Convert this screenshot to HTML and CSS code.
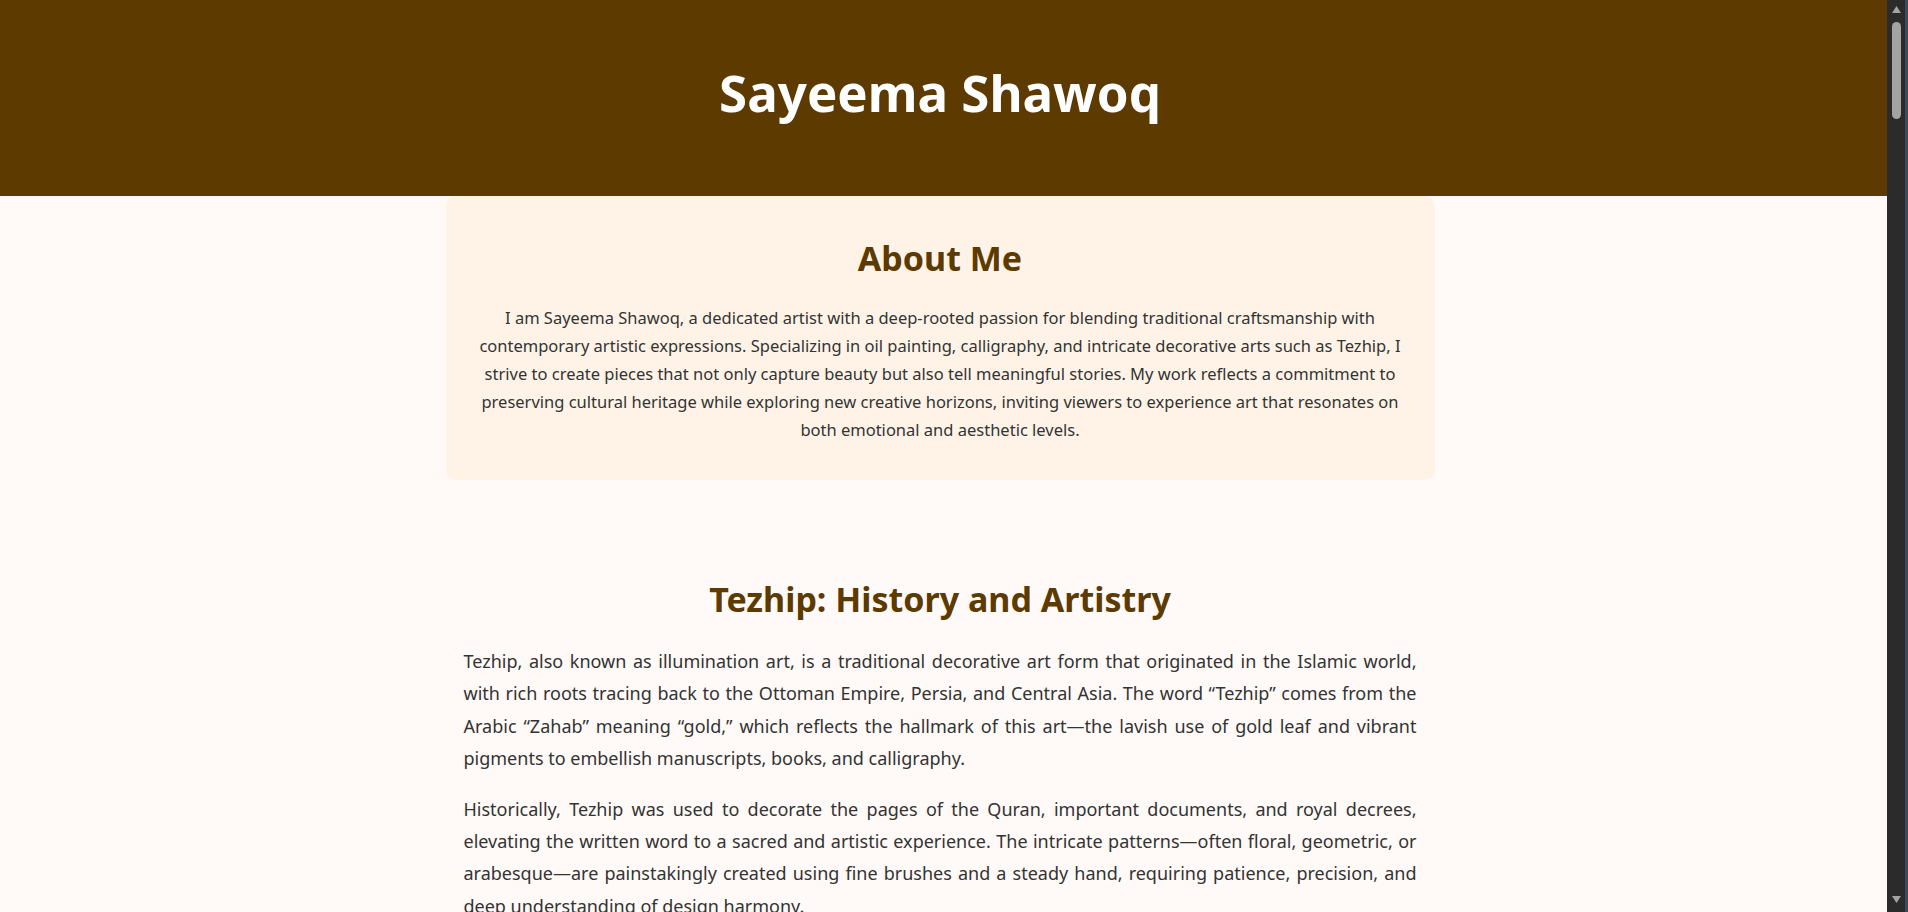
FILE: index.html
```html
<!DOCTYPE html>
<html lang="en">
<head>
<meta charset="utf-8">
<title>Sayeema Shawoq</title>
<link rel="stylesheet" href="styles.css">
</head>
<body>
<div class="app">
<div class="scroller">
<header class="site-header">
  <h1 class="site-title">Sayeema Shawoq</h1>
</header>
<main class="page">
  <section class="about">
    <h2 class="section-title">About Me</h2>
    <p class="about-text">I am Sayeema Shawoq, a dedicated artist with a deep-rooted passion for blending traditional craftsmanship with contemporary artistic expressions. Specializing in oil painting, calligraphy, and intricate decorative arts such as Tezhip, I strive to create pieces that not only capture beauty but also tell meaningful stories. My work reflects a commitment to preserving cultural heritage while exploring new creative horizons, inviting viewers to experience art that resonates on both emotional and aesthetic levels.</p>
  </section>

  <section class="article">
    <h2 class="section-title">Tezhip: History and Artistry</h2>
    <p class="article-text">Tezhip, also known as illumination art, is a traditional decorative art form that originated in the Islamic world, with rich roots tracing back to the Ottoman Empire, Persia, and Central Asia. The word “Tezhip” comes from the Arabic “Zahab” meaning “gold,” which reflects the hallmark of this art—the lavish use of gold leaf and vibrant pigments to embellish manuscripts, books, and calligraphy.</p>
    <p class="article-text">Historically, Tezhip was used to decorate the pages of the Quran, important documents, and royal decrees, elevating the written word to a sacred and artistic experience. The intricate patterns—often floral, geometric, or arabesque—are painstakingly created using fine brushes and a steady hand, requiring patience, precision, and deep understanding of design harmony.</p>
    <p class="article-text">Today, Tezhip continues to inspire artists around the world. By combining time-honoured techniques with contemporary compositions, the art form remains a living tradition that connects past and present.</p>
  </section>

  <section class="article">
    <h2 class="section-title">Oil Painting</h2>
    <p class="article-text">Oil painting allows for rich colour, depth and texture. Each canvas is built up layer by layer, capturing light, atmosphere and emotion in a way that invites the viewer to pause and reflect.</p>
  </section>

  <section class="article">
    <h2 class="section-title">Calligraphy</h2>
    <p class="article-text">Calligraphy is the art of beautiful writing. Through disciplined strokes and careful proportion, letters become visual poetry that carries both meaning and beauty.</p>
  </section>

  <section class="article">
    <h2 class="section-title">Gallery</h2>
    <div class="gallery">
      <div class="tile"></div><div class="tile"></div><div class="tile"></div>
      <div class="tile"></div><div class="tile"></div><div class="tile"></div>
      <div class="tile"></div><div class="tile"></div><div class="tile"></div>
    </div>
  </section>

  <section class="article">
    <h2 class="section-title">Contact</h2>
    <p class="article-text center">For commissions and enquiries, please get in touch.</p>
  </section>
</main>
<footer class="site-footer">© Sayeema Shawoq</footer>
</div>
<div class="scrollbar" aria-hidden="true">
  <svg class="sb-arrow sb-up" width="9" height="7" viewBox="0 0 9 7"><polygon points="4.5,0 9,7 0,7" fill="#a3a3a3"/></svg>
  <div class="sb-thumb"></div>
  <div class="sb-track"></div>
  <svg class="sb-arrow sb-down" width="9" height="7" viewBox="0 0 9 7"><polygon points="0,0 9,0 4.5,7" fill="#a3a3a3"/></svg>
</div>
</div>
</body>
</html>
```

FILE: styles.css
```css
html,
body {
  margin: 0;
  height: 100%;
  background: #fffaf7;
}
body {
  color: #333;
  font-family: "Noto Sans", "Open Sans", sans-serif;
}
.app {
  display: flex;
  height: 100vh;
}
.scroller {
  flex: 1;
  min-width: 0;
  overflow-y: auto;
  scrollbar-width: none;
  background: #fffaf7;
}
.scrollbar {
  width: 18px;
  flex: 0 0 auto;
  background: #2b2b2b;
  border-right: 3px solid #3d4a5c;
  display: flex;
  flex-direction: column;
  align-items: center;
}
.sb-arrow {
  display: block;
  flex: 0 0 auto;
}
.sb-up {
  margin-top: 6px;
}
.sb-thumb {
  margin-top: 9px;
  width: 9px;
  height: 97px;
  border-radius: 5px;
  background: #a3a3a3;
}
.sb-track {
  flex: 1;
}
.sb-down {
  margin-bottom: 9px;
}
.site-header {
  background: #5c3a00;
  height: 196px;
  box-sizing: border-box;
  padding: 0 7px 12px 0;
  display: flex;
  align-items: center;
  justify-content: center;
}
.site-title {
  margin: 0;
  color: #fff;
  font-size: 51px;
  font-weight: 700;
}
.page {
  padding-right: 7px;
}
.about {
  width: 989px;
  box-sizing: border-box;
  margin: 0 auto;
  background: #fff3e7;
  border-radius: 10px;
  padding: 39px 30px 36px;
  text-align: center;
}
.section-title {
  margin: 0 0 23px;
  color: #5c3a00;
  font-size: 34px;
  font-weight: 700;
  text-align: center;
}
.about-text {
  margin: 0;
  font-size: 16.5px;
  line-height: 28px;
}
.article {
  width: 989px;
  box-sizing: border-box;
  margin: 0 auto;
  padding: 96px 18px 0;
}
.article-text {
  margin: 0 0 18px;
  font-size: 18px;
  line-height: 32.4px;
  text-align: justify;
}
.center {
  text-align: center;
}
.gallery {
  display: grid;
  grid-template-columns: repeat(3, 1fr);
  gap: 24px;
}
.tile {
  height: 1400px;
  background: #f3e6d6;
  border-radius: 10px;
}
.site-footer {
  margin-top: 80px;
  background: #5c3a00;
  color: #fff;
  text-align: center;
  padding: 24px;
  font-size: 14px;
}
```
